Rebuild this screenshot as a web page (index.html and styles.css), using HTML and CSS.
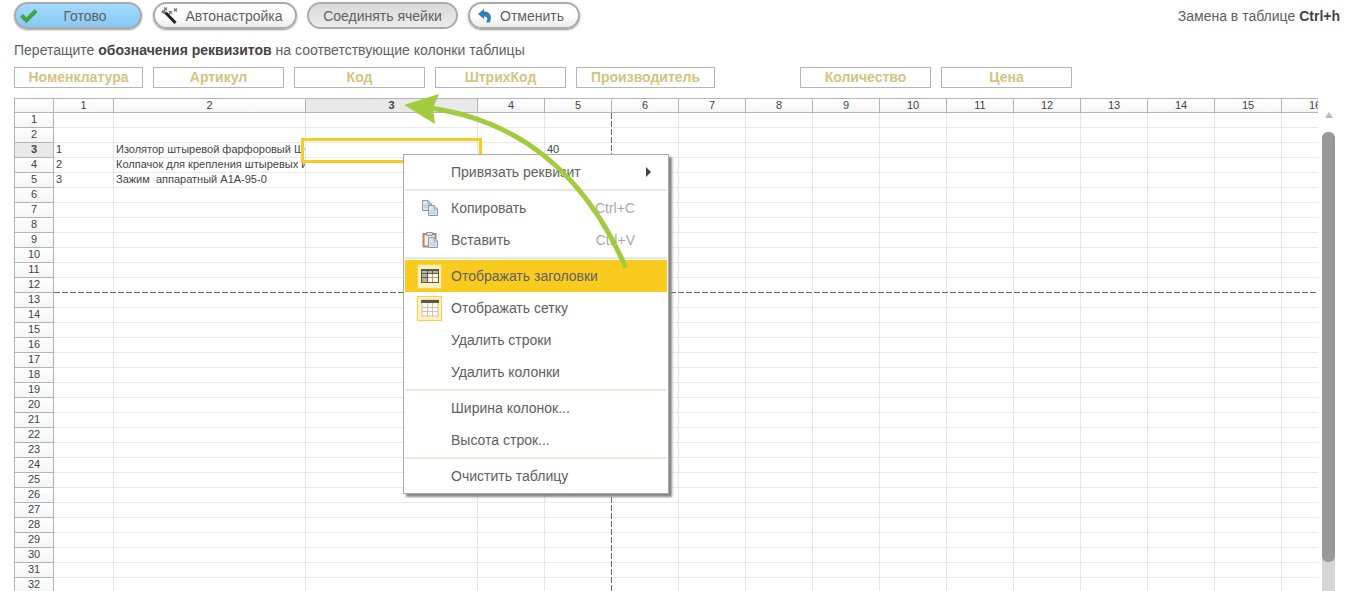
FILE: index.html
```html
<!DOCTYPE html>
<html lang="ru">
<head>
    <meta charset="UTF-8">
    <meta name="viewport" content="width=device-width, initial-scale=1.0">
    <title>Загрузка из таблицы</title>
    <link rel="stylesheet" href="styles.css">
</head>
<body>
    <div class="toolbar">
        <button type="button" class="btn btn-done">
            <svg class="btn-icon" width="18" height="16" viewBox="0 0 18 16">
                <path d="M1.500 7.500 L6.500 12.500 L16 2.500" fill="none" stroke="#3fa544" stroke-width="4"/>
            </svg>
            <span>Готово</span>
        </button>
        <button type="button" class="btn btn-auto">
            <svg class="btn-icon" width="18" height="18" viewBox="0 0 18 18">
                <path d="M1 4 L6 7" fill="none" stroke="#777" stroke-width="3"/>
                <path d="M5 6 L14.500 16" fill="none" stroke="#222" stroke-width="3"/>
                <path d="M3 0.500 l3 3 m0 -3 l-3 3 M8 4 l3 3 m0 -3 l-3 3 M13 1.500 l3 3 m0 -3 l-3 3" fill="none" stroke="#777" stroke-width="1.300"/>
            </svg>
            <span>Автонастройка</span>
        </button>
        <button type="button" class="btn btn-merge">Соединять ячейки</button>
        <button type="button" class="btn btn-undo">
            <svg class="btn-icon" width="14" height="14" viewBox="0 0 14 14">
                <path d="M0 5 L6 0 V2.500 C12.500 2.500 14.500 8 11.500 13.500 H8 C10.500 9.500 9.500 7.500 6 7.500 V10 Z" fill="#2f7fba"/>
            </svg>
            <span>Отменить</span>
        </button>
        <span class="shortcut">Замена в таблице <b>Ctrl+h</b></span>
    </div>

    <p class="hint">Перетащите <b>обозначения реквизитов</b> на соответствующие колонки таблицы</p>

    <div class="fields">
        <div class="field field-first" draggable="true">Номенклатура</div>
        <div class="field" draggable="true">Артикул</div>
        <div class="field" draggable="true">Код</div>
        <div class="field" draggable="true">ШтрихКод</div>
        <div class="field field-wide" draggable="true">Производитель</div>
        <div class="field field-amount" draggable="true">Количество</div>
        <div class="field" draggable="true">Цена</div>
    </div>

    <div class="sheet">
        <div class="sheet-view">
            <table class="grid">
                <colgroup>
                    <col class="col-num"><col class="col-1"><col class="col-2"><col class="col-3"><col span="13">
                </colgroup>
                <thead><tr id="grid-head"><th></th></tr></thead>
                <tbody id="grid-body"></tbody>
            </table>
            <div class="page-break-v"></div>
            <div class="page-break-h"></div>
        </div>
        <div class="scrollbar">
            <div class="scroll-up"></div>
            <div class="scroll-track"><div class="scroll-thumb"></div></div>
        </div>
    </div>

    <div class="menu">
        <button type="button" class="menu-item"><span class="menu-icon"></span>Привязать реквизит<span class="submenu-arrow"></span></button>
        <hr>
        <button type="button" class="menu-item">
            <span class="menu-icon">
                <svg width="18" height="18" viewBox="0 0 18 18" fill="#dde5ec" stroke="#8a9aa9">
                    <path d="M1.500 1.500 H7 L10.500 5 V11.500 H1.500 Z"/>
                    <path d="M7 1.500 V5 H10.500" fill="none"/>
                    <path d="M7.500 6.500 H13 L16.500 10 V16.500 H7.500 Z"/>
                    <path d="M13 6.500 V10 H16.500" fill="none"/>
                    <path d="M9 12 h6 M9 14 h6 M3 6.500 h4 M3 8.500 h4" fill="none" stroke="#b9c5cf"/>
                </svg>
            </span>Копировать<span class="key">Ctrl+C</span>
        </button>
        <button type="button" class="menu-item">
            <span class="menu-icon">
                <svg width="18" height="18" viewBox="0 0 18 18">
                    <path d="M2.500 3 H14.500 V15.500 H2.500 Z" fill="#f4efec" stroke="#b98470" stroke-width="2"/>
                    <path d="M5.500 1.500 H11.500 V4.500 H5.500 Z" fill="#ddd" stroke="#999"/>
                    <path d="M7.500 6.500 H13 L16.500 10 V16.500 H7.500 Z" fill="#dde5ec" stroke="#8a9aa9"/>
                    <path d="M13 6.500 V10 H16.500" fill="none" stroke="#8a9aa9"/>
                    <path d="M9 12 h6 M9 14 h6" fill="none" stroke="#b9c5cf"/>
                </svg>
            </span>Вставить<span class="key">Ctrl+V</span>
        </button>
        <hr>
        <button type="button" class="menu-item active">
            <span class="menu-icon checked">
                <svg width="18" height="16" viewBox="0 0 18 16">
                    <path d="M0 1 H18 V15 H0 Z" fill="#5a574b"/>
                    <path d="M1 3 h5 v2 h-5 z M7 3 h4 v2 h-4 z M12 3 h5 v2 h-5 z M1 6 h5 v3 h-5 z M1 10 h5 v4 h-5 z" fill="#b9b49d"/>
                    <path d="M7 6 H17 V14 H7 Z" fill="#fff7da"/>
                    <path d="M11.500 6 V14 M7 9.500 H17" fill="none" stroke="#a8a38d"/>
                </svg>
            </span>Отображать заголовки
        </button>
        <button type="button" class="menu-item">
            <span class="menu-icon checked">
                <svg width="18" height="18" viewBox="0 0 18 18">
                    <path d="M1 1 H17 V17 H1 Z" fill="#fffdf2" stroke="#c9c4ad"/>
                    <path d="M6.500 4 V17 M11.500 4 V17 M1 8.500 H17 M1 12.500 H17" stroke="#c9c4ad" fill="none"/>
                    <path d="M0 1 H18 V4 H0 Z" fill="#5a574b"/>
                </svg>
            </span>Отображать сетку
        </button>
        <button type="button" class="menu-item"><span class="menu-icon"></span>Удалить строки</button>
        <button type="button" class="menu-item"><span class="menu-icon"></span>Удалить колонки</button>
        <hr>
        <button type="button" class="menu-item"><span class="menu-icon"></span>Ширина колонок...</button>
        <button type="button" class="menu-item"><span class="menu-icon"></span>Высота строк...</button>
        <hr>
        <button type="button" class="menu-item"><span class="menu-icon"></span>Очистить таблицу</button>
    </div>

    <svg class="arrow" width="240" height="190" viewBox="400 85 240 190">
        <path d="M430 108 C515 120 583 170 625 266" fill="none" stroke="#a4cb40" stroke-width="5" stroke-linecap="round"/>
        <path d="M404 105 L439 94 L433 108 L435 124 Z" fill="#a4cb40"/>
    </svg>

    <script src="script.js"></script>
</body>
</html>
```

FILE: styles.css
```css
* {
    box-sizing: border-box;
}

body {
    position: relative;
    margin: 0;
    padding: 2px 12px 0 14px;
    height: 100vh;
    overflow: hidden;
    display: flex;
    flex-direction: column;
    background: #fff;
    color: #606060;
    font-family: "Liberation Sans", Arial, sans-serif;
    font-size: 14px;
}

button {
    font: inherit;
    color: inherit;
    cursor: pointer;
}

b {
    color: #444;
}

/* Toolbar */
.toolbar {
    display: flex;
    gap: 10px;
    height: 28px;
}

.btn {
    display: flex;
    align-items: center;
    justify-content: center;
    height: 27px;
    padding: 0 10px;
    border: 2px solid #aaa;
    border-radius: 14px;
    background: linear-gradient(#fff 50%, #ececec);
    box-shadow: 0 1px 2px #999;
    white-space: nowrap;
}

.btn-icon {
    flex: none;
}

.btn-done {
    width: 128px;
    padding: 0 4px;
    background: linear-gradient(#a3dbff, #86c8f3);
}

.btn-done span {
    flex: 1;
    padding-right: 4px;
}

.btn-auto {
    width: 144px;
    padding: 0 10px 0 4px;
    gap: 6px;
    margin-left: 1px;
}

.btn-merge {
    width: 151px;
    background: linear-gradient(#dadada, #ebebeb);
    box-shadow: none;
}

.btn-undo {
    width: 112px;
    padding: 0 12px 0 6px;
    gap: 8px;
}

.shortcut {
    margin-left: auto;
    line-height: 28px;
    white-space: nowrap;
}

.hint {
    margin: 11px 0 8px;
    line-height: 18px;
    white-space: nowrap;
}

/* Draggable field names */
.fields {
    display: flex;
    gap: 10px;
    margin-bottom: 10px;
}

.field {
    width: 131px;
    height: 21px;
    border: 1px solid #b5b5b5;
    color: #d3c481;
    font-weight: bold;
    line-height: 19px;
    text-align: center;
    cursor: move;
}

.field-first {
    width: 129px;
}

.field-wide {
    width: 139px;
}

.field-amount {
    margin-left: 75px;
}

/* Spreadsheet */
.sheet {
    flex: 1;
    min-height: 0;
    display: flex;
    gap: 4px;
    padding-right: 5px;
}

.sheet-view {
    position: relative;
    flex: 1;
    min-width: 0;
    overflow: hidden;
}

.grid {
    width: 1335px;
    table-layout: fixed;
    border-collapse: separate;
    border-spacing: 0;
    color: #444;
    font-size: 11px;
    line-height: 13px;
}

.col-num { width: 40px; }
.col-1 { width: 60px; }
.col-2 { width: 192px; }
.col-3 { width: 172px; }

.grid th,
.grid td {
    height: 15px;
    padding: 0 2px;
    overflow: hidden;
    vertical-align: top;
    white-space: pre;
}

.grid th {
    border-right: 1px solid #b4b4b4;
    border-bottom: 1px solid #b4b4b4;
    background: linear-gradient(#fff, #f5f5f5);
    font-weight: normal;
}

.grid thead th {
    border-top: 1px solid #b4b4b4;
}

.grid th:first-child {
    border-left: 1px solid #b4b4b4;
}

.grid th.current {
    background: #e9e9e9;
    font-weight: bold;
}

.grid td {
    border-right: 1px solid #e6e6e6;
    border-bottom: 1px solid #e9e9e9;
}

.grid td.selected {
    position: relative;
    overflow: visible;
}

.grid td.selected::after {
    content: "";
    position: absolute;
    inset: -5px -5px -6px;
    border: 3px solid #facb1f;
}

.page-break-v {
    position: absolute;
    top: 15px;
    bottom: 0;
    left: 597px;
    width: 1px;
    background: repeating-linear-gradient(#666 0 6px, #fff 6px 8px);
}

.page-break-h {
    position: absolute;
    top: 194px;
    left: 40px;
    right: 0;
    height: 1px;
    background: repeating-linear-gradient(90deg, #666 0 6px, #fff 6px 8px);
}

.scrollbar {
    width: 13px;
    display: flex;
    flex-direction: column;
    align-items: center;
    padding-top: 14px;
}

.scroll-up {
    border: 4px solid transparent;
    border-top: 0;
    border-bottom: 6px solid #bbb;
    margin-bottom: 14px;
}

.scroll-track {
    flex: 1;
    width: 13px;
    border-radius: 6px 6px 0 0;
    background: #d5d5d5;
}

.scroll-thumb {
    height: 430px;
    border-radius: 6px;
    background: #999;
}

/* Context menu */
.menu {
    position: absolute;
    left: 403px;
    top: 154px;
    width: 266px;
    padding: 1px;
    border: 1px solid #aaa;
    background: #fff;
    box-shadow: 3px 3px 2px #888;
}

.menu hr {
    height: 2px;
    margin: 1px 0;
    border: 0;
    background: #ebe7da;
}

.menu-item {
    display: flex;
    align-items: center;
    width: 100%;
    height: 32px;
    padding: 0 32px 0 12px;
    border: 0;
    background: none;
    text-align: left;
}

.menu-item.active {
    background: #facb1f;
}

.menu-icon {
    display: flex;
    align-items: center;
    justify-content: center;
    width: 25px;
    height: 25px;
    margin-right: 9px;
}

.menu-icon.checked {
    border: 1px solid #fad14a;
    background: #fff0bd;
}

.key {
    margin-left: auto;
    color: #aaa;
}

.submenu-arrow {
    margin-left: auto;
    margin-right: -16px;
    border: 5px solid transparent;
    border-left-color: #444;
    border-right: 0;
}

.arrow {
    position: absolute;
    left: 400px;
    top: 85px;
    pointer-events: none;
}
```

FILE: script.js
```js
const COLS = 16;
const ROWS = 32;
const current = { row: 3, col: 3 };

const data = {
    3: { 1: '1', 2: 'Изолятор штыревой фарфоровый ШФ-20', 5: '40' },
    4: { 1: '2', 2: 'Колпачок для крепления штыревых изоляторов' },
    5: { 1: '3', 2: 'Зажим  аппаратный А1А-95-0' }
};

function addCell(row, tag, text, className) {
    const cell = document.createElement(tag);
    cell.textContent = text;
    if (className) cell.className = className;
    row.appendChild(cell);
}

const head = document.getElementById('grid-head');
for (let c = 1; c <= COLS; c++) {
    addCell(head, 'th', c, c === current.col ? 'current' : '');
}

const body = document.getElementById('grid-body');
for (let r = 1; r <= ROWS; r++) {
    const row = document.createElement('tr');
    addCell(row, 'th', r, r === current.row ? 'current' : '');
    for (let c = 1; c <= COLS; c++) {
        const text = data[r] && data[r][c] ? data[r][c] : '';
        addCell(row, 'td', text, r === current.row && c === current.col ? 'selected' : '');
    }
    body.appendChild(row);
}
```
